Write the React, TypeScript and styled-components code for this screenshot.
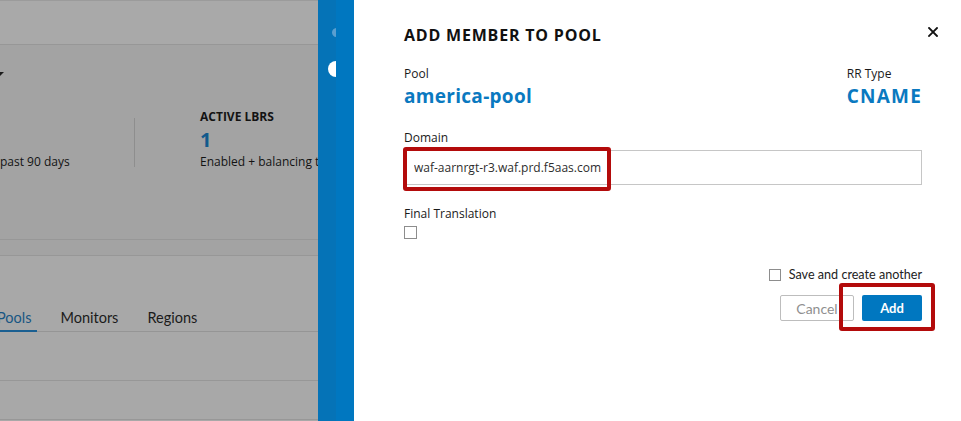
import React, { FC } from 'react';
import styled, { createGlobalStyle, css } from 'styled-components';

const GlobalStyle = createGlobalStyle`
  html, body {
    margin: 0;
    padding: 0;
    overflow: hidden;
    background: #ffffff;
  }
  * {
    box-sizing: border-box;
  }
`;

const Screen = styled.div`
  display: flex;
  width: 961px;
  height: 421px;
  overflow: hidden;
  font-family: 'Open Sans', 'Liberation Sans', sans-serif;
`;

/* ---------- dimmed page behind the drawer ---------- */

const Backdrop = styled.div`
  width: 318px;
  flex: none;
  display: flex;
  flex-direction: column;
  background: #a8a8a8;
  color: #131313;
  overflow: hidden;
`;

const TopBar = styled.div`
  height: 45px;
  flex: none;
  background: #a9a9a9;
  border-top: 1px solid #9b9b9b;
  border-bottom: 1px solid #979797;
`;

const StatsPanel = styled.div`
  height: 195px;
  flex: none;
  display: flex;
  flex-direction: column;
  background: #a3a3a3;
  border-bottom: 1px solid #979797;
`;

const FilterRow = styled.div`
  height: 64px;
  padding-top: 27px;
`;

const Caret = styled.span`
  display: block;
  width: 0;
  height: 0;
  margin-left: -6px;
  border-left: 5px solid transparent;
  border-right: 5px solid transparent;
  border-top: 5px solid #1c1c1c;
`;

const StatsRow = styled.div`
  display: flex;
  align-items: flex-start;
`;

const StatCell = styled.div<{ $width?: number }>`
  ${({ $width }) => css`
    display: flex;
    flex-direction: column;
    ${$width ? `width: ${$width}px; flex: none;` : 'flex: 1;'}
    padding-left: ${$width ? 0 : 65}px;
    white-space: nowrap;
  `}
`;

const StatLabel = styled.div`
  font-size: 12px;
  font-weight: 700;
  line-height: 16px;
  height: 16px;
`;

const StatValue = styled.div`
  margin-top: 3px;
  font-size: 20px;
  font-weight: 700;
  line-height: 24px;
  height: 24px;
  color: #125a8c;
`;

const StatCaption = styled.div`
  margin-top: 2px;
  font-size: 12px;
  line-height: 16px;
`;

const StatDivider = styled.div`
  width: 1px;
  height: 49px;
  margin-top: 9px;
  flex: none;
  background: #8e8e8e;
`;

const Band = styled.div`
  height: 16px;
  flex: none;
  background: #a3a3a3;
  border-bottom: 1px solid #979797;
`;

const TabsPanel = styled.div`
  height: 76px;
  flex: none;
  display: flex;
  align-items: flex-end;
`;

const TabList = styled.div`
  flex: 1;
  display: flex;
  gap: 17px;
  margin-left: -9px;
  border-bottom: 1px solid #959595;
  font-family: Lato, 'Liberation Sans', sans-serif;
`;

const Tab = styled.div<{ $active?: boolean }>`
  ${({ $active }) => css`
    padding: 0 6px 3px;
    margin-bottom: -1px;
    font-size: 14.5px;
    line-height: 18px;
    color: ${$active ? '#175683' : '#1b1b1b'};
    border-bottom: 2px solid ${$active ? '#1a5f91' : 'transparent'};
  `}
`;

const ListRow = styled.div<{ $height: number }>`
  height: ${({ $height }) => $height}px;
  flex: none;
  border-bottom: 1px solid #979797;
`;

/* ---------- drawer rail ---------- */

const Rail = styled.div`
  width: 36px;
  flex: none;
  display: flex;
`;

const RailStrip = styled.div<{ $tone: string }>`
  position: relative;
  width: 18px;
  overflow: hidden;
  background: ${({ $tone }) => $tone};
`;

const RailDot = styled.span<{ $size: number; $top: number; $tone: string }>`
  ${({ $size, $top, $tone }) => css`
    position: absolute;
    right: -${$size / 2}px;
    top: ${$top}px;
    width: ${$size}px;
    height: ${$size}px;
    border-radius: 50%;
    background: ${$tone};
  `}
`;

/* ---------- drawer ---------- */

const Drawer = styled.div`
  flex: 1;
  display: flex;
  flex-direction: column;
  padding: 25px 39px 0 50px;
  background: #ffffff;
  color: #151515;
`;

const DrawerHeader = styled.div`
  display: flex;
  justify-content: space-between;
`;

const Title = styled.h2`
  margin: 0;
  font-size: 16px;
  font-weight: 700;
  line-height: 20px;
  letter-spacing: 0.8px;
  color: #111111;
`;

const CloseButton = styled.button`
  width: 10px;
  height: 10px;
  margin: 2px -16px 0 0;
  padding: 0;
  border: none;
  background: none;
  cursor: pointer;
  display: flex;
`;

const InfoRow = styled.div`
  display: flex;
  justify-content: space-between;
  margin-top: 21px;
`;

const Field = styled.div<{ $gap?: number }>`
  display: flex;
  flex-direction: column;
  margin-top: ${({ $gap }) => $gap ?? 0}px;
`;

const Label = styled.label`
  font-size: 12px;
  line-height: 16px;
  color: #1a1a1a;
`;

const Value = styled.div<{ $tracking?: number }>`
  margin-top: 2px;
  font-size: 19px;
  font-weight: 700;
  line-height: 24px;
  letter-spacing: ${({ $tracking }) => $tracking ?? 0.3}px;
  color: #0a79c0;
`;

const InputWrap = styled.div`
  position: relative;
  margin-top: 4px;
`;

const TextInput = styled.input`
  width: 100%;
  height: 35px;
  padding: 0 9px;
  border: 1px solid #c6c6c6;
  border-radius: 0;
  outline: none;
  font-family: 'Open Sans', 'Liberation Sans', sans-serif;
  font-size: 12px;
  color: #2e2e2e;
`;

const Highlight = styled.span<{ $left: number; $top: number; $w: number; $h: number }>`
  ${({ $left, $top, $w, $h }) => css`
    position: absolute;
    left: ${$left}px;
    top: ${$top}px;
    width: ${$w}px;
    height: ${$h}px;
    border: 4px solid #b30b0b;
    border-radius: 3px;
    pointer-events: none;
  `}
`;

const CheckBox = styled.span<{ $size: number }>`
  display: block;
  flex: none;
  width: ${({ $size }) => $size}px;
  height: ${({ $size }) => $size}px;
  border: 1px solid #8d8d8d;
  background: #ffffff;
`;

const CheckSlot = styled.div`
  margin-top: 4px;
`;

const Footer = styled.div`
  display: flex;
  flex-direction: column;
  align-items: flex-end;
  margin-top: 29px;
  font-family: Lato, 'Liberation Sans', sans-serif;
`;

const SaveRow = styled.label`
  display: flex;
  align-items: center;
  gap: 8px;
  font-size: 12.6px;
  line-height: 14px;
  color: #222222;
`;

const ButtonRow = styled.div`
  display: flex;
  gap: 8px;
  margin-top: 13px;
`;

const Button = styled.button<{ $primary?: boolean }>`
  ${({ $primary }) => css`
    height: 26px;
    width: ${$primary ? 60 : 74}px;
    padding: 0;
    border-radius: 2px;
    font-family: Lato, 'Liberation Sans', sans-serif;
    cursor: pointer;
    border: ${$primary ? 'none' : '1px solid #bdbdbd'};
    background: ${$primary ? '#0077c0' : '#ffffff'};
    color: ${$primary ? '#ffffff' : '#8f8f8f'};
    font-size: ${$primary ? 13 : 14}px;
    font-weight: ${$primary ? 700 : 400};
  `}
`;

const ButtonWrap = styled.div`
  position: relative;
  display: flex;
`;

const CloseIcon: FC = () => (
  <svg width="10" height="10" viewBox="0 0 10 10">
    <path d="M1 1 L9 9 M9 1 L1 9" stroke="#111" strokeWidth="1.8" strokeLinecap="square" />
  </svg>
);

const tabs = ['Pools', 'Monitors', 'Regions'];

const App: FC = () => {
  return (
    <Screen>
      <GlobalStyle />
      <Backdrop>
        <TopBar />
        <StatsPanel>
          <FilterRow>
            <Caret />
          </FilterRow>
          <StatsRow>
            <StatCell $width={134}>
              <StatLabel />
              <StatValue />
              <StatCaption>past 90 days</StatCaption>
            </StatCell>
            <StatDivider />
            <StatCell>
              <StatLabel>ACTIVE LBRS</StatLabel>
              <StatValue>1</StatValue>
              <StatCaption>Enabled + balancing traffic</StatCaption>
            </StatCell>
          </StatsRow>
        </StatsPanel>
        <Band />
        <TabsPanel>
          <TabList>
            {tabs.map((t) => (
              <Tab key={t} $active={t === 'Pools'}>
                {t}
              </Tab>
            ))}
          </TabList>
        </TabsPanel>
        <ListRow $height={49} />
        <ListRow $height={39} />
      </Backdrop>

      <Rail>
        <RailStrip $tone="#0573b7">
          <RailDot $size={9} $top={28} $tone="#5a9fd0" />
          <RailDot $size={16} $top={61} $tone="#ffffff" />
        </RailStrip>
        <RailStrip $tone="#0077c0" />
      </Rail>

      <Drawer>
        <DrawerHeader>
          <Title>ADD MEMBER TO POOL</Title>
          <CloseButton aria-label="Close">
            <CloseIcon />
          </CloseButton>
        </DrawerHeader>

        <InfoRow>
          <Field>
            <Label>Pool</Label>
            <Value>america-pool</Value>
          </Field>
          <Field>
            <Label>RR Type</Label>
            <Value $tracking={1.2}>CNAME</Value>
          </Field>
        </InfoRow>

        <Field $gap={22}>
          <Label>Domain</Label>
          <InputWrap>
            <TextInput readOnly value="waf-aarnrgt-r3.waf.prd.f5aas.com" />
            <Highlight $left={-1} $top={-3} $w={208} $h={44} />
          </InputWrap>
        </Field>

        <Field $gap={21}>
          <Label>Final Translation</Label>
          <CheckSlot>
            <CheckBox $size={13} />
          </CheckSlot>
        </Field>

        <Footer>
          <SaveRow>
            <CheckBox $size={12} />
            Save and create another
          </SaveRow>
          <ButtonRow>
            <Button>Cancel</Button>
            <ButtonWrap>
              <Button $primary>Add</Button>
              <Highlight $left={-23} $top={-12} $w={96} $h={48} />
            </ButtonWrap>
          </ButtonRow>
        </Footer>
      </Drawer>
    </Screen>
  );
};

export default App;
